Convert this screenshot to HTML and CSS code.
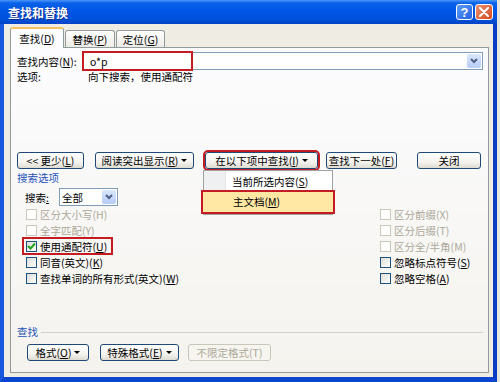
FILE: index.html
```html
<!DOCTYPE html>
<html lang="zh-CN">
<head>
    <meta charset="UTF-8">
    <title>查找和替换</title>
    <link rel="stylesheet" href="styles.css">
</head>
<body>

    <div class="window">
        <div class="titlebar">
            <span class="title">查找和替换</span>
            <span class="tb-btn help">?</span>
            <span class="tb-btn close">
                <svg width="10" height="10" viewBox="0 0 10 10"><path d="M1 1 L9 9 M9 1 L1 9" stroke="#fff" stroke-width="2" stroke-linecap="round"/></svg>
            </span>
        </div>

        <div class="frame">
            <div class="tabs">
                <div class="tab active">查找(<u>D</u>)</div>
                <div class="tab">替换(<u>P</u>)</div>
                <div class="tab">定位(<u>G</u>)</div>
            </div>

            <div class="panel">
                <div class="find-row">
                    <span class="find-label">查找内容(<u>N</u>):</span>
                    <div class="combo">
                        <span class="combo-val">o*p</span>
                        <span class="mark mark-find"></span>
                        <span class="combo-arrow">
                            <svg width="8" height="6" viewBox="0 0 8 6"><path d="M1 1 L4 4 L7 1" fill="none" stroke="#4d6185" stroke-width="2"/></svg>
                        </span>
                    </div>
                </div>

                <div class="opt-row">
                    <span class="opt-label">选项:</span>
                    <span>向下搜索，使用通配符</span>
                </div>

                <div class="btn-row">
                    <div class="btn b-less">&lt;&lt; 更少(<u>L</u>)</div>
                    <div class="btn b-read">阅读突出显示(<u>R</u>)<span class="tri"></span></div>
                    <div class="btn b-in">在以下项中查找(<u>I</u>) <span class="tri"></span>
                        <div class="menu">
                            <div class="menu-item">当前所选内容(<u>S</u>)</div>
                            <div class="menu-item hl">主文档(<u>M</u>)</div>
                        </div>
                    </div>
                    <div class="btn b-next">查找下一处(<u>F</u>)</div>
                    <div class="btn b-close">关闭</div>
                </div>

                <div class="group-title">搜索选项</div>

                <div class="search-row">
                    <span class="search-label">搜索<u>:</u></span>
                    <div class="select">
                        <span>全部</span>
                        <span class="combo-arrow">
                            <svg width="8" height="6" viewBox="0 0 8 6"><path d="M1 1 L4 4 L7 1" fill="none" stroke="#4d6185" stroke-width="2"/></svg>
                        </span>
                    </div>
                </div>

                <div class="checks">
                    <div class="chk off"><span class="box"></span>区分大小写(H)</div>
                    <div class="chk off"><span class="box"></span>区分前缀(X)</div>
                    <div class="chk off"><span class="box"></span>全字匹配(Y)</div>
                    <div class="chk off"><span class="box"></span>区分后缀(T)</div>
                    <div class="chk">
                        <span class="box">
                            <svg width="9" height="9" viewBox="0 0 9 9"><path d="M1 4 L3.5 6.5 L8 1.5" fill="none" stroke="#21a121" stroke-width="2"/></svg>
                        </span>使用通配符(<u>U</u>)
                        <span class="mark mark-wild"></span>
                    </div>
                    <div class="chk off"><span class="box"></span>区分全/半角(M)</div>
                    <div class="chk"><span class="box"></span>同音(英文)(<u>K</u>)</div>
                    <div class="chk"><span class="box"></span>忽略标点符号(<u>S</u>)</div>
                    <div class="chk"><span class="box"></span>查找单词的所有形式(英文)(<u>W</u>)</div>
                    <div class="chk"><span class="box"></span>忽略空格(<u>A</u>)</div>
                </div>

                <div class="group-title line">查找</div>

                <div class="bottom-row">
                    <div class="btn b-fmt">格式(<u>O</u>) <span class="tri"></span></div>
                    <div class="btn b-spec">特殊格式(<u>E</u>)<span class="tri"></span></div>
                    <div class="btn b-nofmt off">不限定格式(T)</div>
                </div>
            </div>
        </div>
    </div>

</body>
</html>
```

FILE: styles.css
```css
body {
    margin: 0;
    background-color: #e6e4dc;
    font-family: "Noto Sans CJK SC", sans-serif;
    font-size: 10.5px;
    color: #000;
}

u {
    text-decoration: underline;
}

.window {
    width: 497px;
    height: 382px;
    display: flex;
    flex-direction: column;
}

/* XP title bar */
.titlebar {
    height: 24px;
    display: flex;
    align-items: center;
    padding: 0 4px 0 8px;
    background: linear-gradient(#4c95fa 0, #0a62e8 3px, #0056e6 40%, #0050da 80%, #0044c6 100%);
}

.title {
    flex: 1;
    color: #fff;
    font-weight: bold;
    font-size: 12px;
    text-shadow: 1px 1px #0a2a90;
}

.tb-btn {
    width: 17px;
    height: 16px;
    box-sizing: border-box;
    border: 1px solid #fff;
    border-radius: 3px;
    margin-left: 2px;
    display: flex;
    align-items: center;
    justify-content: center;
}

.help {
    background: linear-gradient(135deg, #5c9bf6, #2463e4);
    color: #fff;
    font-family: "Liberation Sans", sans-serif;
    font-weight: bold;
    font-size: 13px;
}

.close {
    width: 18px;
    background: linear-gradient(135deg, #ec9272, #d4491f);
}

.frame {
    flex: 1;
    display: flex;
    flex-direction: column;
    background-color: #efede3;
    border-left: 4px solid #1657de;
    border-right: 4px solid #0a3cc4;
    border-bottom: 5px solid #0b45d0;
    padding: 3px 4px 4px 6px;
}

/* tabs */
.tabs {
    height: 20px;
    display: flex;
    align-items: flex-end;
}

.tab {
    height: 17px;
    box-sizing: border-box;
    border: 1px solid #919b9c;
    border-bottom: none;
    border-radius: 3px 3px 0 0;
    background: linear-gradient(#fff, #ecebe5);
    display: flex;
    align-items: center;
    justify-content: center;
    width: 50px;
    margin-left: 1px;
}

.tab.active {
    width: 54px;
    height: 21px;
    margin: 0 0 -1px 0;
    background: #fcfcfe;
    border-top: 2px solid #f2c25c;
    position: relative;
    z-index: 1;
}

.tab:last-child {
    width: 49px;
}

.panel {
    flex: 1;
    border: 1px solid #919b9c;
    background: linear-gradient(#fcfcfe, #f4f3ee);
    padding: 4px 5px 0 6px;
    display: flex;
    flex-direction: column;
    position: relative;
}

/* find what */
.find-row {
    height: 18px;
    display: flex;
    align-items: center;
}

.find-label {
    width: 65px;
}

.combo {
    flex: 1;
    height: 18px;
    box-sizing: border-box;
    border: 1px solid #7f9db9;
    background: #fff;
    display: flex;
    align-items: center;
    padding-left: 7px;
    position: relative;
}

.combo-arrow {
    margin-left: auto;
    margin-right: 1px;
    width: 14px;
    height: 14px;
    border-radius: 2px;
    background: linear-gradient(#dbe6fc, #b6cbf6);
    display: flex;
    align-items: center;
    justify-content: center;
}

.mark {
    position: absolute;
    box-sizing: border-box;
    border: 2px solid #c41c22;
}

.mark-find {
    left: -1px;
    top: -2px;
    width: 111px;
    height: 20px;
}

.opt-row {
    height: 14px;
    line-height: 14px;
    display: flex;
}

.opt-label {
    width: 71px;
}

/* command buttons */
.btn-row, .bottom-row {
    display: flex;
    height: 17px;
}

.btn-row {
    margin-top: 68px;
}

.btn {
    height: 17px;
    box-sizing: border-box;
    border: 1px solid #1f4a78;
    border-radius: 3px;
    background: linear-gradient(#fff, #f4f3ef 60%, #dedbd0);
    display: flex;
    align-items: center;
    justify-content: center;
    line-height: 15px;
    white-space: nowrap;
}

.btn.off {
    border-color: #c9c7ba;
    color: #aca899;
    background: #f6f5ef;
}

.tri {
    width: 0;
    height: 0;
    border-left: 3px solid transparent;
    border-right: 3px solid transparent;
    border-top: 3px solid #000;
    margin-left: 3px;
}

.b-less { width: 67px; }
.b-read { width: 99px; margin-left: 11px; }
.b-in {
    width: 113px;
    margin-left: 11px;
    outline: 2px solid #c41c22;
    position: relative;
}
.b-next { width: 71px; margin-left: 8px; }
.b-close { width: 64px; margin-left: 20px; }

/* drop-down menu over the panel */
.menu {
    position: absolute;
    left: -3px;
    top: 17px;
    width: 130px;
    height: 45px;
    box-sizing: border-box;
    border: 1px solid #a0a0a0;
    padding-top: 3px;
    background: linear-gradient(to right, #eef0f2 21px, #e2e3e5 21px, #e2e3e5 22px, #fff 22px);
    z-index: 2;
}

.menu-item {
    height: 16px;
    line-height: 16px;
    padding-left: 28px;
    text-align: left;
}

.menu-item.hl {
    height: 24px;
    line-height: 20px;
    box-sizing: border-box;
    margin-left: -3px;
    width: 134px;
    padding-left: 30px;
    border: 2px solid #c41c22;
    background: #ffe7a4;
}

.group-title {
    margin-top: 2px;
    height: 14px;
    line-height: 14px;
    color: #1f52b8;
    display: flex;
    align-items: center;
}

.group-title.line {
    margin-top: 39px;
}

.group-title.line::after {
    content: "";
    flex: 1;
    height: 1px;
    margin-left: 3px;
    background: #d3d1c6;
}

.search-row {
    margin-top: 3px;
    height: 18px;
    padding-left: 8px;
    display: flex;
    align-items: center;
}

.search-label {
    width: 34px;
}

.select {
    width: 59px;
    height: 18px;
    box-sizing: border-box;
    border: 1px solid #7f9db9;
    background: #fff;
    padding-left: 2px;
    display: flex;
    align-items: center;
}

/* check boxes */
.checks {
    padding-left: 8px;
    display: grid;
    grid-template-columns: 354px 1fr;
    grid-auto-rows: 16px;
}

.chk {
    display: flex;
    align-items: center;
    position: relative;
    white-space: nowrap;
}

.chk .box {
    width: 11px;
    height: 11px;
    box-sizing: border-box;
    border: 1px solid #1c5180;
    background: linear-gradient(135deg, #dcdcd7, #fff);
    margin: 0 3px 0 1px;
    display: flex;
    align-items: center;
    justify-content: center;
}

.chk.off {
    color: #aca899;
}

.chk.off .box {
    border-color: #cac8bb;
    background: #fff;
}

.mark-wild {
    left: -3px;
    top: -1px;
    width: 91px;
    height: 18px;
}

.bottom-row {
    margin-top: 5px;
    padding-left: 10px;
}

.b-fmt { width: 62px; }
.b-spec { width: 79px; margin-left: 11px; }
.b-nofmt { width: 83px; margin-left: 9px; }
```
